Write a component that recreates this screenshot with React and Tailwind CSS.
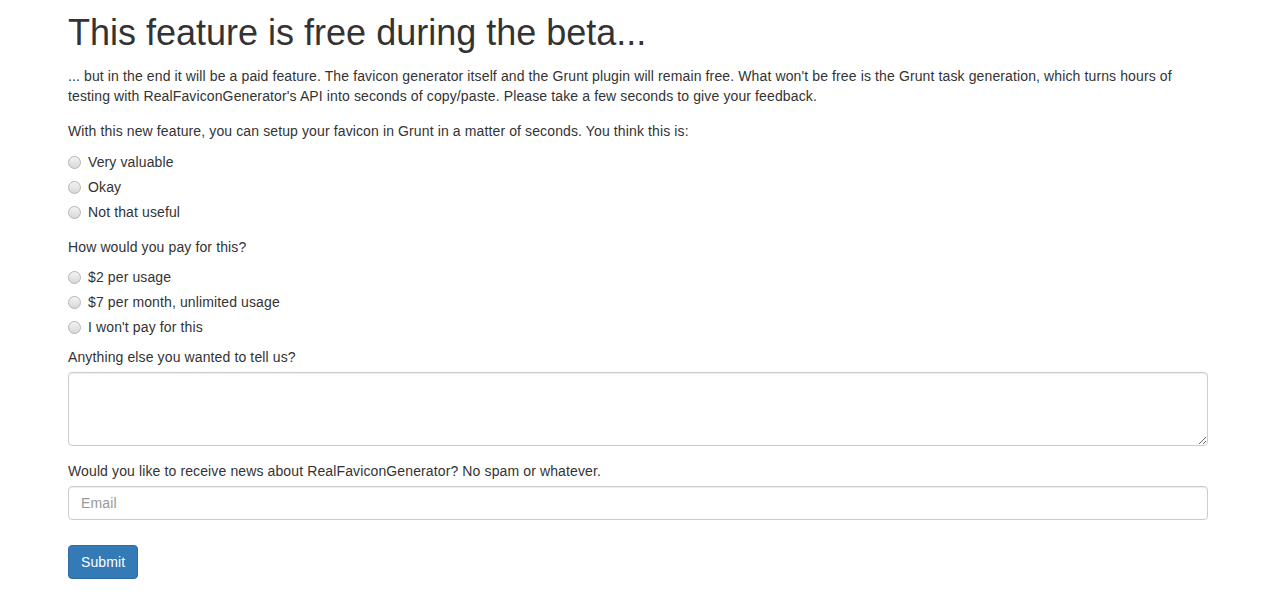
import React from "react";

function Radio({ label }) {
  return (
    <label className="flex items-center h-[20px] cursor-pointer">
      <span className="w-[13px] h-[13px] rounded-full border border-[#b4b4b4] bg-gradient-to-b from-[#f3f3f3] to-[#d8d8d8] shrink-0" />
      <span className="ml-[7px]">{label}</span>
    </label>
  );
}

export default function App() {
  return (
    <div className="bg-white min-h-[594px] text-[#333] text-[14px] leading-[20px] tracking-[0.12px]" style={{ fontFamily: '"Liberation Sans", Arial, sans-serif' }}>
      <div className="w-[1170px] mx-auto px-[15px] pt-[13px]">
        <h1 className="text-[36px] leading-[40px] font-normal mb-[13px] tracking-normal">This feature is free during the beta...</h1>
        <p className="mb-[15px]">
          ... but in the end it will be a paid feature. The favicon generator itself and the Grunt plugin will remain free. What won't be free is the Grunt task generation, which turns hours of testing with RealFaviconGenerator's API into seconds of copy/paste. Please take a few seconds to give your feedback.
        </p>
        <p>With this new feature, you can setup your favicon in Grunt in a matter of seconds. You think this is:</p>
        <div className="mt-[11px] flex flex-col gap-[5px]">
          <Radio label="Very valuable" />
          <Radio label="Okay" />
          <Radio label="Not that useful" />
        </div>
        <p className="mt-[15px]">How would you pay for this?</p>
        <div className="mt-[10px] flex flex-col gap-[5px]">
          <Radio label="$2 per usage" />
          <Radio label="$7 per month, unlimited usage" />
          <Radio label="I won't pay for this" />
        </div>
        <p className="mt-[10px] mb-[5px]">Anything else you wanted to tell us?</p>
        <textarea
          rows={3}
          className="block w-full h-[74px] border border-[#ccc] rounded-[4px] px-[12px] py-[6px] resize-y outline-none shadow-[inset_0_1px_1px_rgba(0,0,0,0.075)]"
        />
        <p className="mt-[15px] mb-[5px]">Would you like to receive news about RealFaviconGenerator? No spam or whatever.</p>
        <input
          type="text"
          placeholder="Email"
          className="block w-full h-[34px] border border-[#ccc] rounded-[4px] px-[12px] py-[6px] outline-none placeholder:text-[#999] shadow-[inset_0_1px_1px_rgba(0,0,0,0.075)]"
        />
        <button className="mt-[25px] h-[34px] px-[12px] bg-[#337ab7] border border-[#2e6da4] rounded-[4px] text-white text-[14px]">
          Submit
        </button>
      </div>
    </div>
  );
}
